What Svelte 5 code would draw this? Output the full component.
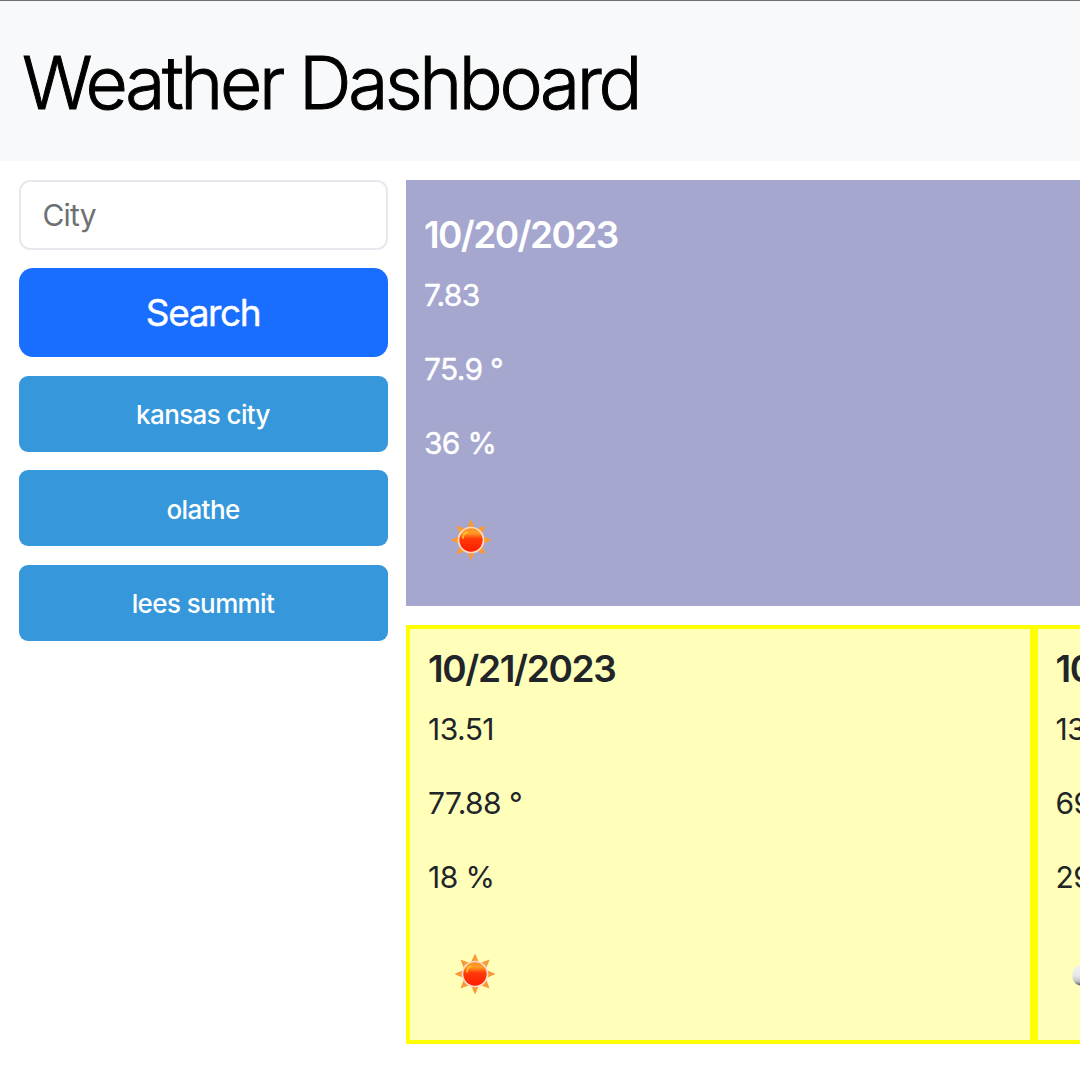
<script>
  const cities = ['kansas city', 'olathe', 'lees summit'];
  const today = { date: '10/20/2023', wind: '7.83', temp: '75.9 °', humidity: '36 %', icon: 'sun' };
  const forecast = [
    { date: '10/21/2023', wind: '13.51', temp: '77.88 °', humidity: '18 %', icon: 'sun' },
    { date: '10/22/2023', wind: '13.67', temp: '69.28 °', humidity: '29 %', icon: 'cloud' },
  ];
  const rays = [0, 45, 90, 135, 180, 225, 270, 315];
</script>

{#snippet weatherIcon(kind)}
  {#if kind === 'sun'}
    <svg class="icon" viewBox="0 0 44 44" aria-label="Sunny">
      <defs>
        <linearGradient id="sun-core" x1="0" y1="0" x2="0" y2="1">
          <stop offset="0" stop-color="#ff8c20" />
          <stop offset="0.2" stop-color="#ffa028" />
          <stop offset="0.45" stop-color="#ff3a08" />
          <stop offset="1" stop-color="#ff1c00" />
        </linearGradient>
      </defs>
      {#each rays as angle}
        <path d="M22 0.4 L26 9.4 H18 Z" fill="#f99a35" transform="rotate({angle} 22 22)" />
      {/each}
      <circle cx="22" cy="22" r="14" fill="#fbdccb" />
      <circle cx="22" cy="22" r="12.2" fill="url(#sun-core)" />
      <path d="M13.5 20 Q14 15 18 13.8" fill="none" stroke="#ffc928" stroke-width="1.6" stroke-linecap="round" />
    </svg>
  {:else}
    <svg class="icon cloud" viewBox="0 0 60 44" aria-label="Cloudy">
      <defs>
        <linearGradient id="cloud-body" x1="0" y1="0" x2="0" y2="1">
          <stop offset="0" stop-color="#f8f8f8" />
          <stop offset="0.65" stop-color="#e8e8e8" />
          <stop offset="0.85" stop-color="#c4c4c4" />
          <stop offset="1" stop-color="#555" />
        </linearGradient>
      </defs>
      <path d="M9 34 C4 33 1 29 1 24 C1 18 4 14 9 12 C12 4 24 0 32 8 C44 4 54 14 50 26 C48 33 42 35 36 34 Z" fill="url(#cloud-body)" />
    </svg>
  {/if}
{/snippet}

{#snippet details(day)}
  <h5>{day.date}</h5>
  <p>{day.wind}</p>
  <p>{day.temp}</p>
  <p>{day.humidity}</p>
  {@render weatherIcon(day.icon)}
{/snippet}

<div class="page">
  <header><h1>Weather Dashboard</h1></header>
  <div class="content">
    <aside>
      <input type="text" placeholder="City" />
      <button class="search">Search</button>
      {#each cities as city}
        <button class="city">{city}</button>
      {/each}
    </aside>
    <main>
      <section class="today">{@render details(today)}</section>
      <div class="forecast">
        {#each forecast as day}
          <article>{@render details(day)}</article>
        {/each}
      </div>
    </main>
  </div>
</div>

<style>
  :global(body) {
    background: #fff;
    overflow: hidden;
  }
  .page {
    width: 1080px;
    height: 1080px;
    overflow: hidden;
    color: #212529;
    font-family: Inter, 'Liberation Sans', sans-serif;
    box-sizing: border-box;
  }
  .page :global(*) {
    box-sizing: border-box;
  }
  header {
    height: 161px;
    padding-left: 22px;
    border-top: 1px solid #6f6f73;
    background: #f8f9fb;
    display: flex;
    align-items: center;
  }
  h1 {
    margin: 0;
    padding-top: 4px;
    color: #000;
    font-size: 73px;
    font-weight: 300;
    line-height: 90px;
    letter-spacing: -3.35px;
    -webkit-text-stroke: 1px #000;
    white-space: nowrap;
  }
  .content {
    display: grid;
    grid-template-columns: 369px 1255px;
    column-gap: 18.5px;
    padding: 18.5px;
    align-items: start;
  }
  aside {
    display: flex;
    flex-direction: column;
    gap: 18.6px;
  }
  input {
    width: 100%;
    height: 70px;
    padding: 0 22px;
    border: 2px solid #e5e8ec;
    border-radius: 11px;
    outline: none;
    font: 400 30px/44px Inter, sans-serif;
    letter-spacing: -0.8px;
    background: #fff;
  }
  input::placeholder {
    color: #6e7073;
    opacity: 1;
  }
  button {
    width: 100%;
    padding: 0;
    border: 0;
    color: #fff;
    font-family: Inter, sans-serif;
    text-align: center;
  }
  .search {
    height: 89px;
    border-radius: 14px;
    background: #1a6eff;
    font-size: 37px;
    font-weight: 400;
    letter-spacing: -1.4px;
    -webkit-text-stroke: 0.4px #fff;
  }
  .city {
    height: 76px;
    border-radius: 9px;
    background: #3698db;
    font-size: 26px;
    font-weight: 480;
    letter-spacing: -0.6px;
    padding-top: 2px;
  }
  main {
    display: flex;
    flex-direction: column;
    gap: 19px;
  }
  .today {
    height: 426px;
    padding: 32px 18px 0;
    background: #a5a7cf;
    color: #fff;
  }
  h5 {
    margin: 0 0 16px;
    font-size: 37px;
    line-height: 45px;
    font-weight: 560;
    letter-spacing: -1.35px;
    white-space: nowrap;
  }
  .today h5 {
    letter-spacing: -1.6px;
  }
  p {
    margin: 0 0 30px;
    font-size: 30px;
    line-height: 44px;
    letter-spacing: -0.55px;
    white-space: nowrap;
  }
  .today p {
    letter-spacing: -0.7px;
    -webkit-text-stroke: 0.4px #fff;
  }
  .icon {
    display: block;
    width: 42px;
    height: 42px;
    margin: 54px 0 0 26px;
  }
  .cloud {
    width: 60px;
    margin-left: 14px;
  }
  .forecast {
    display: flex;
  }
  article {
    flex: 0 0 627.5px;
    height: 419px;
    padding: 17px 18px;
    border: 4px solid #ff0;
    background: #ffffba;
  }
</style>
